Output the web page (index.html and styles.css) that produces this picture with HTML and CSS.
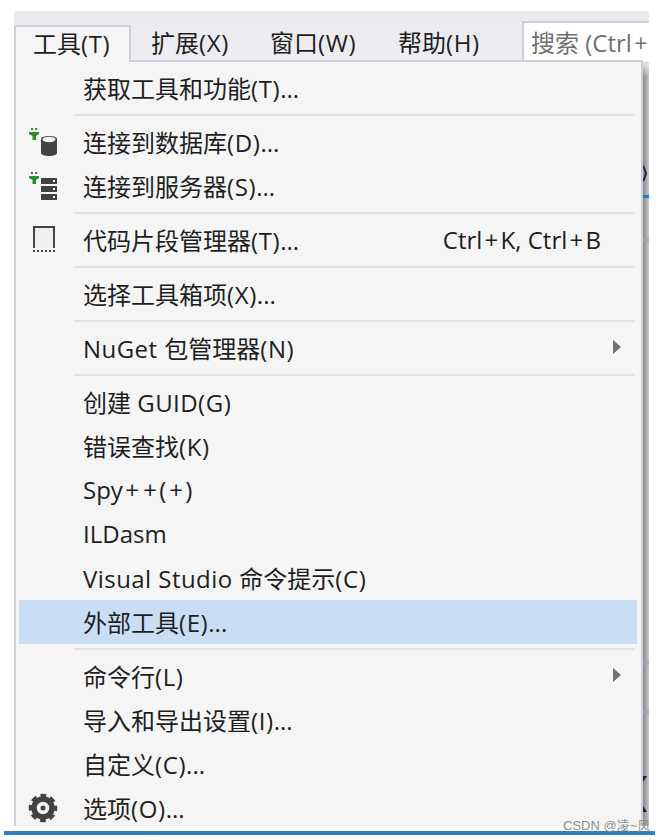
FILE: index.html
```html
<!DOCTYPE html>
<html lang="zh">
<head>
<meta charset="utf-8">
<title>工具菜单</title>
<link rel="stylesheet" href="styles.css">
</head>
<body>
<div class="shot">
  <div class="menubar">
    <div class="tab active">工具<span class="key">(T)</span></div>
    <div class="tab t2">扩展<span class="key">(X)</span></div>
    <div class="tab t3">窗口<span class="key">(W)</span></div>
    <div class="tab t4">帮助<span class="key">(H)</span></div>
    <div class="search">搜索 (Ctrl<span class="plus">+</span></div>
  </div>
  <div class="body">
    <div class="menu">
      <div class="row"><span class="label">获取工具和功能<span class="key">(T)</span>...</span></div>
      <div class="sep"></div>
      <div class="row">
        <svg class="icon" width="34" height="34" viewBox="0 0 34 34"><g fill="#2e8b2e"><rect x="3" y="5" width="2" height="2"/><rect x="7" y="5" width="2" height="2"/><path d="M1 9h10v2L8 13v4H4.500v-4L1 11z"/></g><path d="M13 16c0-4 16-4 16 0v14c0 4-16 4-16 0z" fill="#424242"/><ellipse cx="21" cy="16.500" rx="6.500" ry="2.700" fill="#f0eff1"/></svg>
        <span class="label">连接到数据库<span class="key">(D)</span>...</span>
      </div>
      <div class="row">
        <svg class="icon" width="34" height="34" viewBox="0 0 34 34"><g fill="#2e8b2e"><rect x="3" y="5" width="2" height="2"/><rect x="7" y="5" width="2" height="2"/><path d="M1 9h10v2L8 13v4H4.500v-4L1 11z"/></g><path fill="#424242" d="M13 11h16v6H13zM13 19h16v6H13zM13 27h16v6H13z"/><g fill="#f0eff1"><rect x="25" y="13" width="2" height="2"/><rect x="25" y="21" width="2" height="2"/><rect x="25" y="29" width="2" height="2"/></g></svg>
        <span class="label">连接到服务器<span class="key">(S)</span>...</span>
      </div>
      <div class="sep"></div>
      <div class="row">
        <svg class="icon" width="34" height="34" viewBox="0 0 34 34"><path d="M5 5h22v22H5z" fill="#f0f0ee"/><path d="M6 27V6h20v21" fill="none" stroke="#424242" stroke-width="2"/><path d="M5 30h22" stroke="#424242" stroke-width="2" stroke-dasharray="2 2" fill="none"/></svg>
        <span class="label">代码片段管理器<span class="key">(T)</span>...</span>
        <span class="shortcut">Ctrl<span class="plus">+</span>K, Ctrl<span class="plus">+</span>B</span>
      </div>
      <div class="sep"></div>
      <div class="row"><span class="label">选择工具箱项<span class="key">(X)</span>...</span></div>
      <div class="sep"></div>
      <div class="row">
        <span class="label"><span class="en">NuGet </span>包管理器<span class="key">(N)</span></span>
        <span class="arrow"></span>
      </div>
      <div class="sep"></div>
      <div class="row"><span class="label">创建 <span class="en">GUID</span><span class="key">(G)</span></span></div>
      <div class="row"><span class="label">错误查找<span class="key">(K)</span></span></div>
      <div class="row"><span class="label">Spy<span class="plus">+</span><span class="plus">+</span><span class="key">(</span><span class="plus">+</span><span class="key">)</span></span></div>
      <div class="row"><span class="label">ILDasm</span></div>
      <div class="row"><span class="label"><span class="en">Visual Studio </span>命令提示<span class="key">(C)</span></span></div>
      <div class="row selected"><span class="label">外部工具<span class="key">(E)</span>...</span></div>
      <div class="sep"></div>
      <div class="row">
        <span class="label">命令行<span class="key">(L)</span></span>
        <span class="arrow"></span>
      </div>
      <div class="row"><span class="label">导入和导出设置<span class="key">(I)</span>...</span></div>
      <div class="row"><span class="label">自定义<span class="key">(C)</span>...</span></div>
      <div class="row">
        <svg class="icon" width="34" height="34" viewBox="0 0 34 34"><circle cx="15" cy="19" r="9" fill="none" stroke="#424242" stroke-width="5.500"/><circle cx="15" cy="19" r="12" fill="none" stroke="#424242" stroke-width="4.500" stroke-dasharray="5.400 4.025" stroke-dashoffset="2.700"/><circle cx="15" cy="19" r="2.500" fill="#424242"/></svg>
        <span class="label">选项<span class="key">(O)</span>...</span>
      </div>
    </div>
    <div class="shadow">
      <span class="band blue"></span>
      <span class="band b1"></span>
      <span class="band b2"></span>
      <span class="band b3"></span>
      <span class="mark peek"></span>
      <span class="mark m1"></span>
      <span class="mark m2"></span>
    </div>
  </div>
  <div class="status"></div>
  <div class="watermark">CSDN @凌~风</div>
</div>
</body>
</html>
```
FILE: styles.css
```css
html, body { margin: 0; padding: 0; background: #fff; }
body { width: 660px; height: 840px; overflow: hidden; font-family: "Open Sans", "Noto Sans CJK SC", sans-serif; color: #1e1e1e; }
.shot { position: relative; width: 655px; height: 835px; padding: 11px 0 0 0; box-sizing: border-box; display: flex; flex-direction: column; }
.key { letter-spacing: .6px; }
.en { letter-spacing: .45px; }
.plus { padding: 0 2.250px; }
.menubar { position: relative; margin-left: 14px; width: 635px; height: 49px; flex: none; display: flex; align-items: flex-start; background: linear-gradient(#e9e9ee, #eeeef2); box-sizing: border-box; padding-top: 14px; font-size: 24px; line-height: 36px; white-space: nowrap; }
.tab { height: 37px; box-sizing: border-box; }
.tab.active { width: 117px; padding-left: 17px; background: #f5f5f5; border: 2px solid #ccced9; border-bottom: 0; margin-right: 20px; position: relative; z-index: 2; line-height: 33px; }
.t2 { width: 119px; }
.t3 { width: 128px; }
.t4 { width: 124px; }
.search { flex: 1; height: 43px; margin-top: -4px; background: #fff; border: 2px solid #ccced9; border-width: 2px 0 2px 2px; box-sizing: border-box; padding-left: 7px; color: #717171; overflow: hidden; line-height: 40px; }
.body { flex: none; height: 766px; display: flex; margin-left: 14px; }
.menu { position: relative; z-index: 1; width: 629px; height: 766px; flex: none; box-sizing: border-box; overflow: hidden; background: #f5f5f5; border: 2px solid #ccced9; border-bottom: 0; padding: 4px 4px 0 3px; font-size: 24px; }
.row { position: relative; height: 44px; box-sizing: border-box; display: flex; align-items: center; padding: 0 36px 2px 64px; white-space: nowrap; }
.row.selected { background: #c9def5; }
.label { flex: 1; }
.icon { position: absolute; left: 9px; top: 3px; }
.arrow { width: 0; height: 0; border-left: 8px solid #717171; border-top: 7px solid transparent; border-bottom: 7px solid transparent; margin-right: -20px; }
.sep { height: 2px; margin: 4px 2px 4px 56px; background: #e0e3e6; }
.shadow { position: relative; overflow: hidden; width: 6px; height: 763px; margin-top: 3px; background: linear-gradient(#e8e8ec, rgba(232,232,236,0) 14px), linear-gradient(90deg, #8b8b8b, #a3a3a3 50%, #cbcbcb); }
.band { position: absolute; left: 0; width: 6px; height: 4px; background: rgba(160,160,180,.65); }
.blue { top: 132px; height: 3px; background: #1c7fc0; }
.b1 { top: 175px; }
.b2 { top: 598px; }
.b3 { top: 647px; }
.mark { position: absolute; left: 0; width: 4px; height: 6px; background: #14233a; }
.peek { top: 102px; height: 17px; clip-path: polygon(0 0, 40% 10%, 100% 50%, 40% 90%, 0 100%, 0 85%, 50% 50%, 0 15%); }
.m1 { top: 713px; clip-path: polygon(0 100%, 100% 0, 0 0); }
.m2 { top: 743px; clip-path: polygon(0 0, 100% 100%, 0 100%); }
.status { position: absolute; left: 4px; right: 0; top: 831px; height: 4px; background: #2f7fbc; }
.watermark { position: absolute; z-index: 2; left: 563px; top: 815px; font: 13px "Liberation Sans", "Noto Sans CJK SC", sans-serif; color: #8e8e8e; white-space: nowrap; }
```
